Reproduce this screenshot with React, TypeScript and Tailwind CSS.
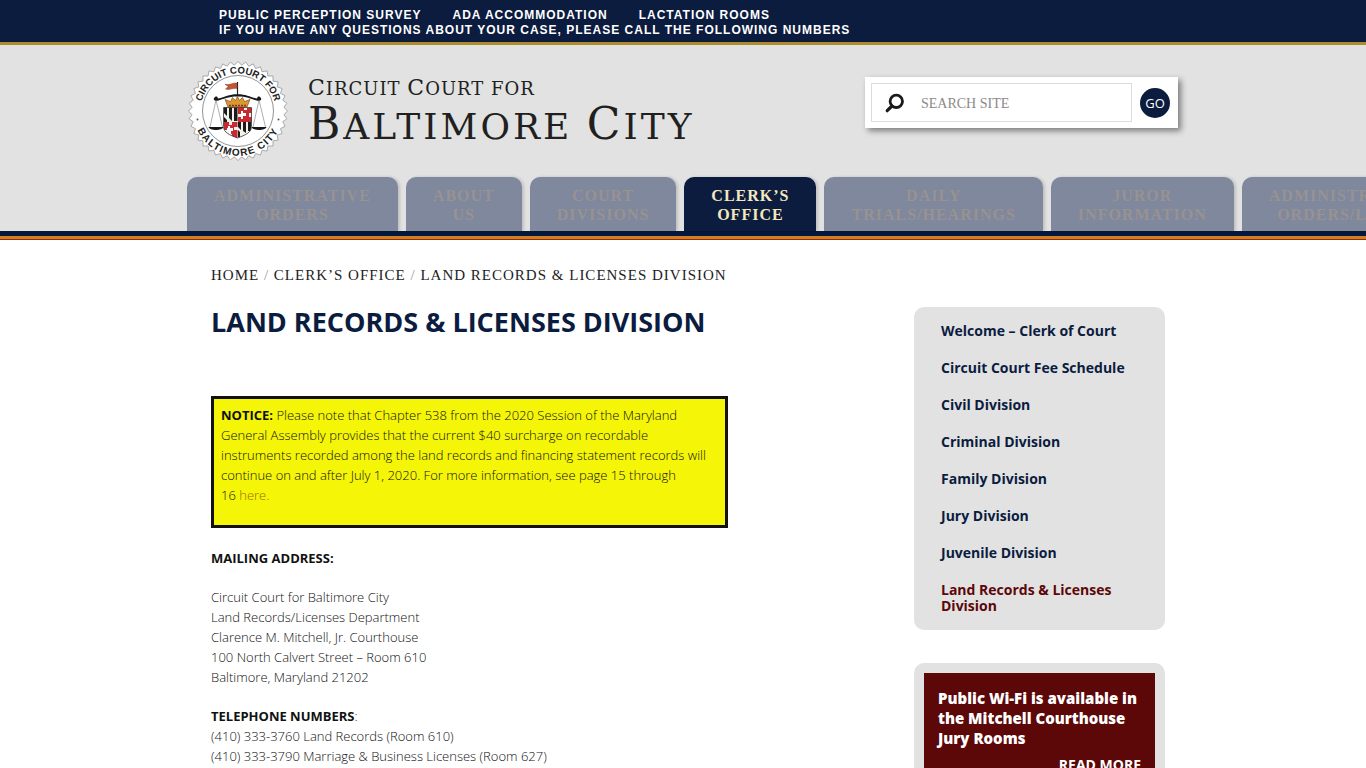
import React from "react";

const tabs: { lines: [string, string]; active?: boolean }[] = [
  { lines: ["ADMINISTRATIVE", "ORDERS"] },
  { lines: ["ABOUT", "US"] },
  { lines: ["COURT", "DIVISIONS"] },
  { lines: ["CLERK’S", "OFFICE"], active: true },
  { lines: ["DAILY", "TRIALS/HEARINGS"] },
  { lines: ["JUROR", "INFORMATION"] },
  { lines: ["ADMINISTRATIVE", "ORDERS/LOCAL"] },
];

const sideLinks = [
  "Welcome – Clerk of Court",
  "Circuit Court Fee Schedule",
  "Civil Division",
  "Criminal Division",
  "Family Division",
  "Jury Division",
  "Juvenile Division",
  "Land Records & Licenses Division",
];

const sealEdge = Array.from({ length: 80 }, (_, i) => {
  const a = (i * Math.PI) / 40;
  const r = i % 2 ? 46 : 49.5;
  return `${(50 + r * Math.cos(a)).toFixed(2)},${(50 + r * Math.sin(a)).toFixed(2)}`;
}).join(" ");

function Seal() {
  return (
    <svg viewBox="0 0 100 100" className="h-[100px] w-[100px] shrink-0" role="img" aria-label="Court seal">
      <polygon points={sealEdge} fill="#fff" stroke="#8c8c8c" strokeWidth=".7" />
      <circle cx="50" cy="50" r="35.5" fill="#fff" stroke="#777" strokeWidth=".8" />
      <path id="seal-top" d="M12.5 50 A37.5 37.5 0 0 1 87.5 50" fill="none" />
      <path id="seal-bottom" d="M5.2 50 A44.8 44.8 0 0 0 94.8 50" fill="none" />
      <g fill="#222" fontFamily="'Liberation Sans', sans-serif" fontWeight="700" textAnchor="middle">
        <text fontSize="9.6">
          <textPath href="#seal-top" startOffset="50%">CIRCUIT COURT FOR</textPath>
        </text>
        <text fontSize="10" letterSpacing="1.2">
          <textPath href="#seal-bottom" startOffset="50%">BALTIMORE CITY</textPath>
        </text>
      </g>
      <circle cx="9.5" cy="58.5" r="1" fill="#555" />
      <circle cx="90.5" cy="58.5" r="1" fill="#555" />
      {/* flag */}
      <path d="M49.5 21v13" stroke="#222" strokeWidth="1.2" />
      <path d="M49 22.3C45 21 42 25 37 23c1 1.200 2 2 3.600 2.200L37.500 28c4 1.400 7.500-1.200 11.500-.6z" fill="#c65332" stroke="#7a4428" strokeWidth=".5" />
      {/* beam and pans */}
      <path d="M27 36c-2.600 2-.8 4.600 2.600 3.800 6.500-1.600 9.800-4.200 19.900-4.200s13.400 2.600 19.900 4.200c3.400.8 5.200-1.800 2.600-3.800-1.300-1-3.200-.2-2.800 1.600-8-1.800-10.600-4.400-19.700-4.400s-11.700 2.600-19.700 4.400c.4-1.800-1.500-2.600-2.800-1.600z" fill="#181818" />
      <path d="M28 39l-6 27M28 39l6.500 27M71 39l-6 27M71 39l6.500 27" stroke="#777" strokeWidth=".6" fill="none" />
      <path d="M20.500 66h15c-1 4-14 4-15 0zM63.500 66h15c-1 4-14 4-15 0z" fill="#171717" />
      {/* crown */}
      <path d="M40 46l-3-7.500 5.500 2 2-4 3 3 2-4 2 4 3-3 2 4 5.500-2-3 7.500z" fill="#d99a2b" stroke="#7b3a1b" strokeWidth=".6" />
      <path d="M41 44.500h17" stroke="#9c2b20" strokeWidth="1.300" strokeDasharray="2 1" />
      {/* quartered shield */}
      <clipPath id="shield">
        <path d="M35.500 46.500h28v19c0 6-6 8.500-14 11.500-8-3-14-5.500-14-11.500z" />
      </clipPath>
      <g clipPath="url(#shield)">
        <path d="M35 46h29v32H35z" fill="#f5f2ec" />
        <path d="M36 46v6l3 3v-9zM41 46v11l3 3V46zM46 46v14h3.500V46zM36 56v5h3v-2zM50 61v5l3 3v-8zM55 61v9l3 2V61zM60 61v9h3v-9zM50 69v7h2v-5z" fill="#1b1b1b" />
        <path d="M50 46h6v3h3v-2h5v5h-3v4h3v5H50v-5h4v-3h-4zM36 61h5v3h3v-3h5.500v5H46v3h3.500v8H44v-4h-3v-4h-5z" fill="#c92a32" />
        <path d="M53 50h2v2h3v3h-3v3h-2v-3h-2v-2h2zM40 65h2v2h3v3h-2v3h-2v-3h-2v-3h1z" fill="#fff" />
      </g>
      <path d="M35.500 46.500h28v19c0 6-6 8.500-14 11.500-8-3-14-5.500-14-11.500z" fill="none" stroke="#333" strokeWidth=".8" />
    </svg>
  );
}

function SearchForm() {
  return (
    <form
      className="mt-8 mr-px flex items-center gap-2 bg-white py-[6px] pr-2 pl-[6px] shadow-[3px_3px_6px_rgba(0,0,0,0.45)]"
      onSubmit={(e) => e.preventDefault()}
    >
      <label className="flex h-[39px] w-[261px] items-center border border-[#dcdcdc] pl-3">
        <svg viewBox="0 0 20 20" className="h-5 w-5 shrink-0" aria-hidden="true">
          <circle cx="12.3" cy="8.3" r="6.2" fill="none" stroke="#1a1a1a" strokeWidth="2.8" />
          <path d="M8 13L3.2 17.7" stroke="#1a1a1a" strokeWidth="3.2" strokeLinecap="round" />
        </svg>
        <input
          type="text"
          aria-label="Search site"
          placeholder="SEARCH SITE"
          className="ml-[17px] h-[37px] w-full min-w-0 bg-transparent pt-[2px] font-['Liberation_Serif',serif] text-[14px] outline-none placeholder:text-[#8a8a8a]"
        />
      </label>
      <button type="submit" className="h-[30px] w-[30px] rounded-full bg-[#0b1c3f] text-center text-[13px] leading-[30px] text-white">
        GO
      </button>
    </form>
  );
}

export default function App() {
  return (
    <div className="min-h-screen overflow-x-clip bg-white font-['Open_Sans',sans-serif] text-[13px] leading-5 text-[#111]">
      <div className="border-b-[3px] border-[#b08d2c] bg-[#0b1c3f] pt-2 pb-1">
        <nav className="mx-auto max-w-[992px] px-8 font-['Liberation_Sans',sans-serif] text-[12px] leading-[15px] font-bold tracking-[1px] text-white">
          <div className="flex gap-[31px]">
            <a href="#survey">PUBLIC PERCEPTION SURVEY</a>
            <a href="#ada">ADA ACCOMMODATION</a>
            <a href="#lactation">LACTATION ROOMS</a>
          </div>
          <a href="#numbers" className="block">
            IF YOU HAVE ANY QUESTIONS ABOUT YOUR CASE, PLEASE CALL THE FOLLOWING NUMBERS
          </a>
        </nav>
      </div>

      <header className="bg-[#e2e2e2]">
        <div className="mx-auto max-w-[992px]">
          <div className="flex h-[132px] items-start justify-between">
            <a href="#home" className="mt-4 ml-[1px] flex text-[#211f20]">
              <Seal />
              <span className="ml-5 block font-['DejaVu_Serif',serif] whitespace-nowrap">
                <span className="mt-3 block text-[18px] leading-[30px] tracking-[1px]">
                  <span className="text-[22px]">C</span>IRCUIT <span className="text-[22px]">C</span>OURT FOR
                </span>
                <span className="block text-[36px] leading-[40px] tracking-[3px]">
                  <span className="text-[44px]">B</span>ALTIMORE <span className="text-[44px]">C</span>ITY
                </span>
              </span>
            </a>
            <SearchForm />
          </div>
          <nav className="flex gap-2 font-['Liberation_Serif',serif] text-[16px] leading-[19px] font-bold tracking-[1px] whitespace-nowrap">
            {tabs.map((tab) => (
              <a
                key={tab.lines.join(" ")}
                href="#section"
                className={
                  tab.active
                    ? "shrink-0 rounded-t-[10px] bg-[#0b1c3f] px-[27px] pt-[9px] pb-[7px] text-center text-[#f6e8bd] shadow-[2px_0_3px_rgba(0,0,0,0.15)]"
                    : "shrink-0 rounded-t-[10px] bg-[#7f889c] px-[27px] pt-[9px] pb-[7px] text-center text-[#989292] shadow-[2px_0_3px_rgba(0,0,0,0.15)]"
                }
              >
                {tab.lines[0]}
                <br />
                {tab.lines[1]}
              </a>
            ))}
          </nav>
        </div>
      </header>
      <div className="h-[5px] bg-[#05183b]" />
      <div className="h-1 border-t border-b border-t-[#b08d2c] border-b-[#8c2f14] bg-[#e2761b]" />

      <main className="mx-auto max-w-[992px] pt-[25px] pr-[14px] pl-6">
        <nav aria-label="Breadcrumb" className="font-['Liberation_Serif',serif] text-[15px] leading-5 tracking-[1px] text-[#222]">
          <a href="#home">HOME</a> <span className="text-[#999]">/</span> <a href="#clerk">CLERK’S OFFICE</a>{" "}
          <span className="text-[#999]">/</span> <span>LAND RECORDS &amp; LICENSES DIVISION</span>
        </nav>
        <div className="mt-[22px] flex items-start justify-between">
          <article className="w-[517px] font-light">
            <h1 className="text-[27px] leading-[30px] font-bold whitespace-nowrap text-[#0b1c3f]">
              LAND RECORDS &amp; LICENSES DIVISION
            </h1>
            <div className="mt-[59px] border-[3px] border-[#111] bg-[#f5f507] pt-[6px] pr-2 pb-5 pl-[7px]">
              <strong className="font-bold">NOTICE:</strong> Please note that Chapter 538 from the 2020 Session of the
              Maryland General Assembly provides that the current $40 surcharge on recordable instruments recorded among the land
              records and financing statement records will continue on and after July 1, 2020. For more information, see page 15
              through
              <br />
              16&nbsp;<a href="#bill" className="text-[#966e00]">here.</a>
            </div>
            <h2 className="mt-5 font-bold">MAILING ADDRESS:</h2>
            <address className="mt-[19px] not-italic">
              Circuit Court for Baltimore City
              <br />
              Land Records/Licenses Department
              <br />
              Clarence M. Mitchell, Jr. Courthouse
              <br />
              100 North Calvert Street – Room 610
              <br />
              Baltimore, Maryland 21202
            </address>
            <p className="mt-[19px]">
              <strong className="font-bold">TELEPHONE NUMBERS</strong>:
              <br />
              (410) 333-3760 Land Records (Room 610)
              <br />
              (410) 333-3790 Marriage &amp; Business Licenses (Room 627)
            </p>
          </article>

          <aside className="w-[251px]">
            <ul className="flex flex-col gap-[21px] rounded-[10px] bg-[#e2e2e2] px-[27px] py-4 text-[14px] leading-4 font-bold text-[#0b1c3f]">
              {sideLinks.map((label, i) => (
                <li key={label} className={i === sideLinks.length - 1 ? "text-[#5c0708]" : ""}>
                  <a href="#division">{label}</a>
                </li>
              ))}
            </ul>
            <section className="mt-[33px] rounded-[10px] bg-[#e2e2e2] p-[10px]">
              <div className="bg-[#5c0708] px-[14px] pt-[15px] pb-3 font-bold text-white">
                <h2 className="text-[15px] leading-5 font-extrabold">Public Wi-Fi is available in the Mitchell Courthouse Jury Rooms</h2>
                <a href="#wifi" className="mt-[7px] block text-right text-[14px]">
                  READ MORE
                </a>
              </div>
            </section>
          </aside>
        </div>
      </main>
    </div>
  );
}
